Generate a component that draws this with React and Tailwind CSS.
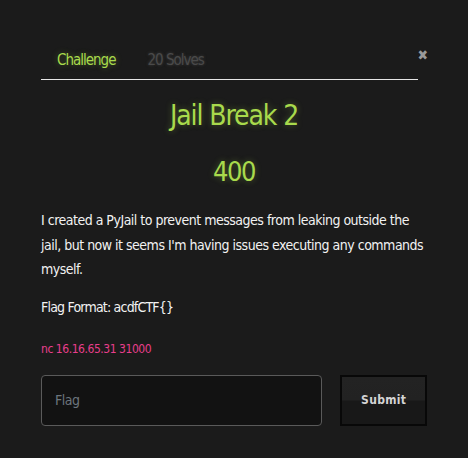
export default function App() {
  const font = { fontFamily: '"DejaVu Sans", sans-serif', fontStretch: 'condensed' };
  const glow = { textShadow: '0 0 6px rgba(166,217,74,0.35)' };
  return (
    <div className="w-[468px] h-[458px] bg-[#1b1b1b] overflow-hidden" style={font}>
      <div className="relative pt-[47px] px-[41px]">
        <button className="absolute right-[40px] top-[48px] text-[#9a9a9a] text-[14px] font-bold leading-none">✖</button>
        <div className="w-[377px] border-b border-[#e6e6e6] flex gap-[32px] pl-[16px] pb-[6px]">
          <span className="text-[#a8da4c] text-[15px] leading-[26px] tracking-[-1px]" style={glow}>Challenge</span>
          <span className="text-[#4a4a4a] text-[15px] leading-[26px] tracking-[-1px]" style={{ textShadow: '0 0 3px rgba(90,90,90,0.6)' }}>20 Solves</span>
        </div>
        <h1 className="text-center text-[#a8da4c] text-[28px] leading-[40px] mt-[16px] tracking-[-1.1px]" style={glow}>Jail Break 2</h1>
        <div className="text-center text-[#a8da4c] text-[27px] leading-[40px] mt-[16px] tracking-[-1.5px]" style={glow}>400</div>
        <p className="text-[#f2f2f2] text-[14px] leading-[24.5px] mt-[16px] tracking-[-0.5px] whitespace-nowrap">
          I created a PyJail to prevent messages from leaking outside the<br />
          jail, but now it seems I'm having issues executing any commands<br />
          myself.
        </p>
        <p className="text-[#f2f2f2] text-[14px] leading-[24px] mt-[13px] tracking-[-0.8px]">Flag Format: acdfCTF{'{}'}</p>
        <p className="text-[#e83e8c] text-[12px] leading-[20px] mt-[20px] tracking-[-0.45px]">nc 16.16.65.31 31000</p>
        <div className="flex mt-[16px] gap-[18px]">
          <div className="w-[282px] h-[51px] rounded-[4px] border border-[#5a5a5a] bg-[#121212] flex items-center px-[13px]">
            <span className="text-[#6c757d] text-[14px] tracking-[-0.5px]">Flag</span>
          </div>
          <button className="w-[87px] h-[51px] border-2 border-[#080808] bg-[linear-gradient(to_bottom,#232323_0%,#222222_48%,#181818_52%,#181818_100%)] text-[#d4d4d4] text-[12px] font-bold tracking-[0.3px]">Submit</button>
        </div>
      </div>
    </div>
  );
}
